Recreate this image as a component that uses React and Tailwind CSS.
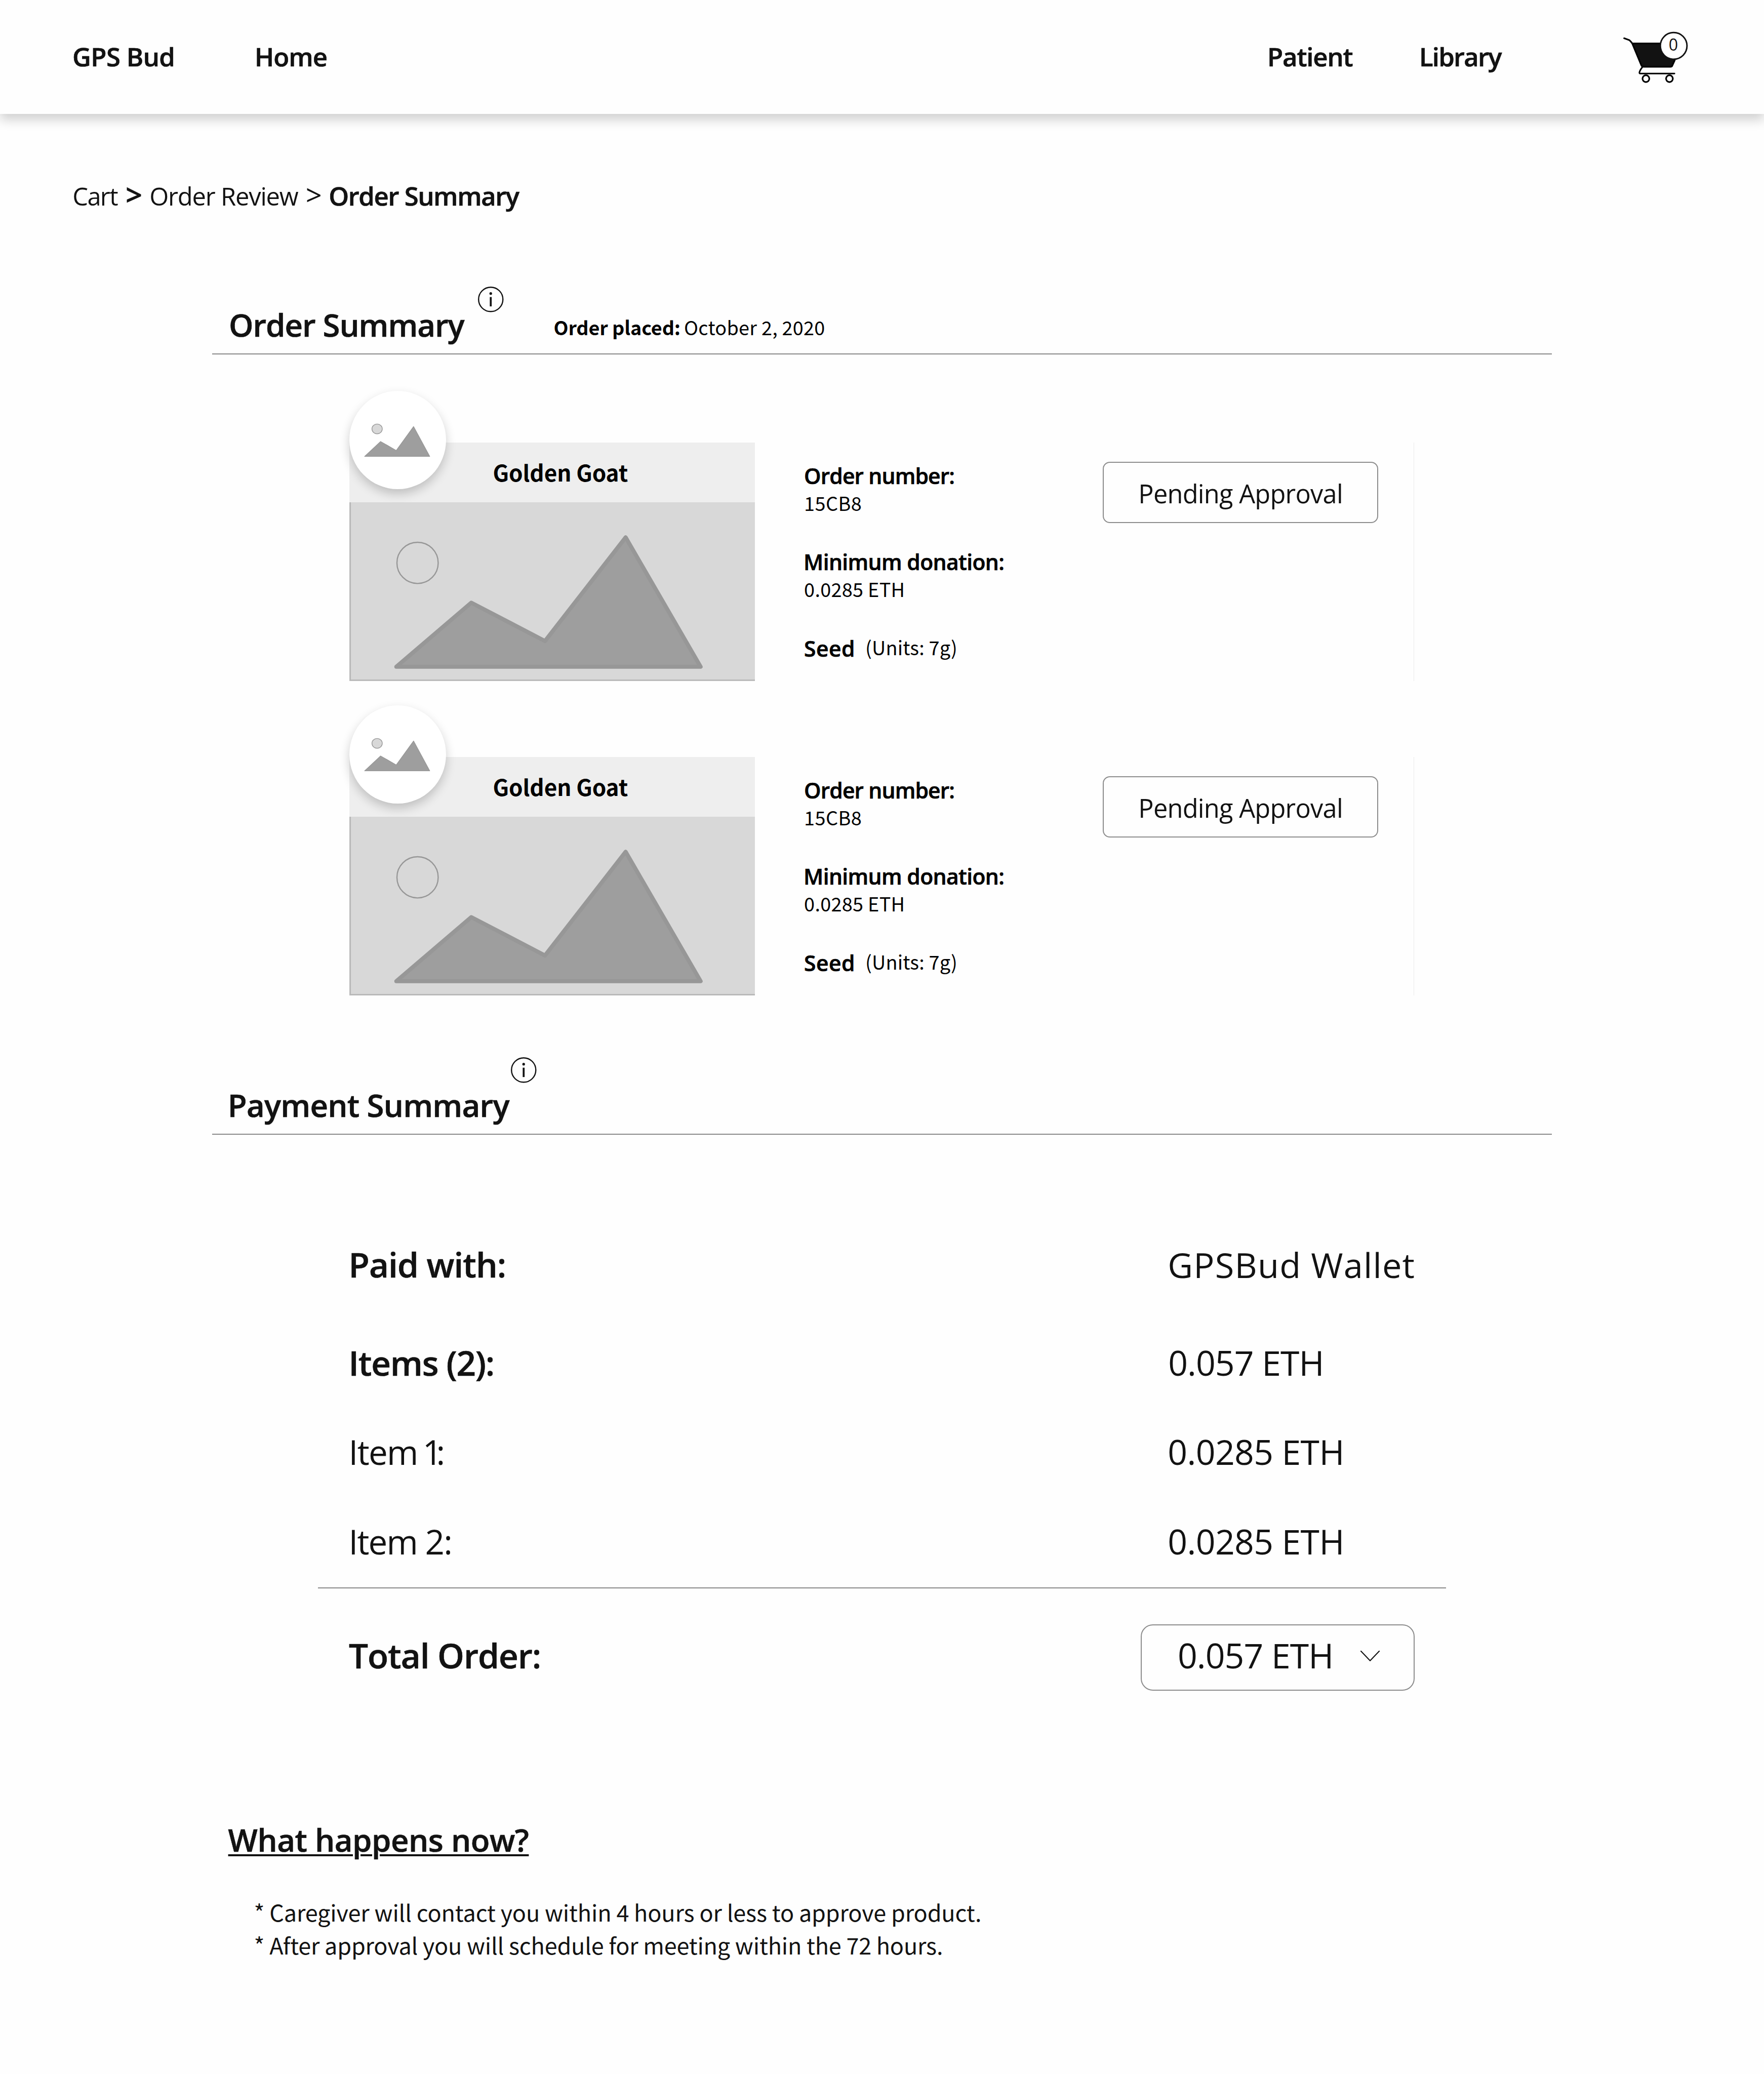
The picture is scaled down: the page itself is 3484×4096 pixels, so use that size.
import React from "react";

const heavy = "font-semibold [-webkit-text-stroke:0.7px_currentColor]";

const orders = [
  { name: "Golden Goat", number: "15CB8", donation: "0.0285 ETH", product: "Seed", units: "(Units: 7g)", status: "Pending Approval" },
  { name: "Golden Goat", number: "15CB8", donation: "0.0285 ETH", product: "Seed", units: "(Units: 7g)", status: "Pending Approval" },
];

function CartIcon() {
  return (
    <svg viewBox="220 93 500 400" className="-mt-[2px] h-[107.5px] w-[134.4px] shrink-0 [-webkit-text-stroke:0px]" fill="none" strokeLinecap="round" strokeLinejoin="round">
      <path d="M293 200 H625 L606 324 L587 365 Q583 372 575 372 H378 Q366 372 361 363 Z" fill="#121212" stroke="none" />
      <path d="M234 162 L272 176 Q280 181 293 199 L361 362 Q366 372 378 372 H575 Q583 372 587 365 L606 323 M293 200 H510" stroke="#000" strokeWidth="12" />
      <path d="M368 374 Q349 398 346 415 Q346 421 352 421 H604" stroke="#000" strokeWidth="11" />
      <circle cx="394" cy="459" r="25" stroke="#000" strokeWidth="12" />
      <circle cx="567" cy="459" r="25" stroke="#000" strokeWidth="12" />
      <circle cx="598" cy="218" r="98" fill="#fff" stroke="#121212" strokeWidth="11" />
      <text x="596" y="254" textAnchor="middle" fontSize="120" fill="#121212" className="font-['Open_Sans',sans-serif] font-normal">0</text>
    </svg>
  );
}

function InfoIcon() {
  return (
    <svg viewBox="0 0 62 62" className="size-[50.5px] shrink-0 self-start" fill="none">
      <circle cx="31" cy="31" r="29.5" stroke="#121212" strokeWidth="3" />
      <circle cx="31" cy="16.8" r="3.2" fill="#121212" />
      <path d="M31 25.3 V48" stroke="#121212" strokeWidth="4.6" />
    </svg>
  );
}

function AvatarPlaceholder() {
  return (
    <div className="absolute -top-[102px] left-0 h-[194px] w-[191px] rounded-[50%] bg-white shadow-[0_9px_20px_rgba(0,0,0,0.2)]">
      <svg viewBox="47 83 709 721" preserveAspectRatio="none" className="h-full w-full">
        <ellipse cx="250.5" cy="362" rx="38" ry="36" fill="#d8d8d8" stroke="#979797" strokeWidth="5" />
        <path d="M159 564 L276 454.5 L391 520.5 L518 345 L636 564 Z" fill="#9e9e9e" stroke="#979797" strokeWidth="5" strokeLinejoin="round" />
      </svg>
    </div>
  );
}

function PicturePlaceholder() {
  return (
    <svg viewBox="855 1230 993 438" preserveAspectRatio="none" className="block h-[353px] w-full bg-[#d8d8d8]" fill="none">
      <path d="M857 1230 V1666 H1848" stroke="#b8b8b8" strokeWidth="3.5" />
      <circle cx="1022" cy="1378.5" r="50.5" stroke="#979797" strokeWidth="3" />
      <path d="M970 1633 L1153.5 1476 L1334 1570 L1531.5 1316 L1715 1633 Z" fill="#9e9e9e" stroke="#979797" strokeWidth="10" strokeLinejoin="round" />
    </svg>
  );
}

function OrderCard({ order }) {
  return (
    <article className="flex h-[471px] w-[2103px] border-r border-[#ebebeb] text-black">
      <div className="relative w-[801px]">
        <div className="flex h-[118px] items-center bg-[#eee] pb-[2px] pl-[284px] font-['Noto_Sans_CJK_SC',sans-serif] text-[44.1px] font-bold tracking-[-0.11px]">
          {order.name}
        </div>
        <PicturePlaceholder />
        <AvatarPlaceholder />
      </div>
      <div className="ml-[97.5px] flex w-[590px] flex-col gap-[63px] pt-[38px]">
        <div>
          <div className={`text-[42.6px] leading-[54px] tracking-[-0.87px] ${heavy}`}>Order number:</div>
          <div className="font-['Noto_Sans_CJK_SC',sans-serif] text-[37.9px] leading-[53px] tracking-[0.4px]">{order.number}</div>
        </div>
        <div>
          <div className={`-ml-[1px] text-[42.6px] leading-[54px] tracking-[-0.65px] ${heavy}`}>Minimum donation:</div>
          <div className="font-['Noto_Sans_CJK_SC',sans-serif] text-[37.9px] leading-[53px] tracking-[0.26px]">{order.donation}</div>
        </div>
        <div className="flex items-start pt-[1px]">
          <div className={`w-[121px] text-[42.6px] leading-[54px] tracking-[0.5px] ${heavy}`}>{order.product}</div>
          <div className="font-['Noto_Sans_CJK_SC',sans-serif] text-[37.9px] leading-[49px] tracking-[0.15px]">{order.units}</div>
        </div>
      </div>
      <button className="mt-[38px] flex h-[121px] w-[544px] items-center justify-center rounded-[14px] border-[2.4px] border-[#8c8c8c] pt-[5px] text-[50.5px] tracking-[-0.75px] text-[#121212]">
        {order.status}
      </button>
    </article>
  );
}

export default function App() {
  return (
    <div className="h-[4096px] w-[3484px] overflow-hidden bg-[#fefefe] font-['Open_Sans',sans-serif] whitespace-nowrap text-[#121212]">
      <header className={`flex h-[225px] items-center bg-[#fefefe] pb-[1px] pl-[143px] text-[50.8px] shadow-[0_12px_20px_rgba(0,0,0,0.175)] ${heavy}`}>
        <a className="w-[360px] tracking-[-0.6px]">GPS Bud</a>
        <a className="w-[2000px] tracking-[-0.98px]">Home</a>
        <a className="w-[300px] tracking-[-1.15px]">Patient</a>
        <a className="w-[401px] tracking-[-1.76px]">Library</a>
        <CartIcon />
      </header>

      <nav className="mt-[129px] flex h-[60px] items-baseline pl-[143.3px] text-[48.9px] leading-[60px]">
        <span className="w-[105px] tracking-[-1.7px]">Cart</span>
        <span className={`w-[47px] text-[57px] leading-[60px] ${heavy}`}>&gt;</span>
        <span className="w-[308.5px] tracking-[-1.22px]">Order Review</span>
        <span className="w-[45.4px] text-[56px] leading-[60px]">&gt;</span>
        <span className={`text-[50.8px] leading-[60px] tracking-[-1.4px] ${heavy}`}>Order Summary</span>
      </nav>

      <main className="mx-auto w-[2646px]">
        <section>
          <div className="mt-[133px] flex h-[153px] items-end border-b-2 border-[#888]">
            <h2 className={`mb-[17px] w-[525px] pl-[33px] text-[61.7px] leading-[80px] tracking-[-1.04px] ${heavy}`}>Order Summary</h2>
            <div className="flex h-[132px] items-end">
              <InfoIcon />
              <p className="mb-[27px] ml-[99px] flex font-['Noto_Sans_CJK_SC',sans-serif] text-[37.8px] leading-[50px] text-black">
                <span className="w-[257.5px] font-bold tracking-[-0.15px]">Order placed:</span>
                <span className="tracking-[0.25px]">October 2, 2020</span>
              </p>
            </div>
          </div>

          <div className="mt-[174px] flex flex-col gap-[150px] pl-[270.6px]">
            {orders.map((order, i) => (
              <OrderCard key={i} order={order} />
            ))}
          </div>
        </section>

        <section>
          <div className="mt-[122px] flex h-[153px] items-end border-b-2 border-[#888]">
            <h2 className={`mb-[17px] w-[590px] pl-[30.8px] text-[61.7px] leading-[80px] tracking-[-0.74px] ${heavy}`}>Payment Summary</h2>
            <InfoIcon />
          </div>

          <div className="mt-[206px] pl-[269.5px] text-[67.3px] leading-[100px]">
            <div className="flex">
              <div className={`w-[1617.8px] tracking-[-0.91px] ${heavy}`}>Paid with:</div>
              <div className="pt-[1px] text-[68.5px] tracking-[1.2px]">GPSBud Wallet</div>
            </div>
            <div className="mt-[93px] flex">
              <div className={`w-[1618.7px] tracking-[-1.24px] ${heavy}`}>Items (2):</div>
              <div className="text-[67.9px] tracking-[-0.95px]">0.057 ETH</div>
            </div>
            <div className="mt-[76px] flex">
              <div className="w-[1617.8px] tracking-[-1.65px]">
                Item<span className="tracking-[-7.65px]"> </span><span className="tracking-[-11.65px]">1</span>:
              </div>
              <div className="text-[67.9px] tracking-[-0.62px]">0.0285 ETH</div>
            </div>
            <div className="mt-[77px] flex">
              <div className="w-[1617.8px] tracking-[-1.85px]">Item 2:</div>
              <div className="text-[67.9px] tracking-[-0.62px]">0.0285 ETH</div>
            </div>
          </div>

          <div className="mt-[41px] ml-[209px] h-[2px] w-[2228px] bg-[#888]" />

          <div className="mt-[71px] flex h-[131px] pl-[270px] text-[67.3px]">
            <div className={`flex w-[1564px] items-center pb-[9px] tracking-[-1px] ${heavy}`}>Total Order:</div>
            <button className="flex w-[541px] items-center rounded-[24px] border-[2.4px] border-[#8c8c8c] pl-[71px]">
              <span className="w-[361px] pb-[10px] text-left text-[67.9px] tracking-[-0.95px]">0.057 ETH</span>
              <svg viewBox="0 0 47 26" className="-mt-[6px] h-[21px] w-[38px]" fill="none">
                <path d="M1 1 L23.5 24.5 L46 1" stroke="#121212" strokeWidth="2.6" strokeLinecap="round" strokeLinejoin="round" />
              </svg>
            </button>
          </div>
        </section>

        <section className="mt-[254px]">
          <h2 className={`pl-[31.6px] text-[61.7px] leading-[80px] tracking-[-0.45px] ${heavy}`}>
            <span className="underline decoration-[4px] underline-offset-[5px]">What happens now?</span>
          </h2>
          <ul className="mt-[70px] pl-[82.5px] font-['Noto_Sans_CJK_SC',sans-serif] text-[45px] leading-[65.3px]">
            <li className="tracking-[-0.17px]">* Caregiver will contact you within 4 hours or less to approve product.</li>
            <li className="tracking-[-0.22px]">* After approval you will schedule for meeting within the 72 hours.</li>
          </ul>
        </section>
      </main>
    </div>
  );
}
